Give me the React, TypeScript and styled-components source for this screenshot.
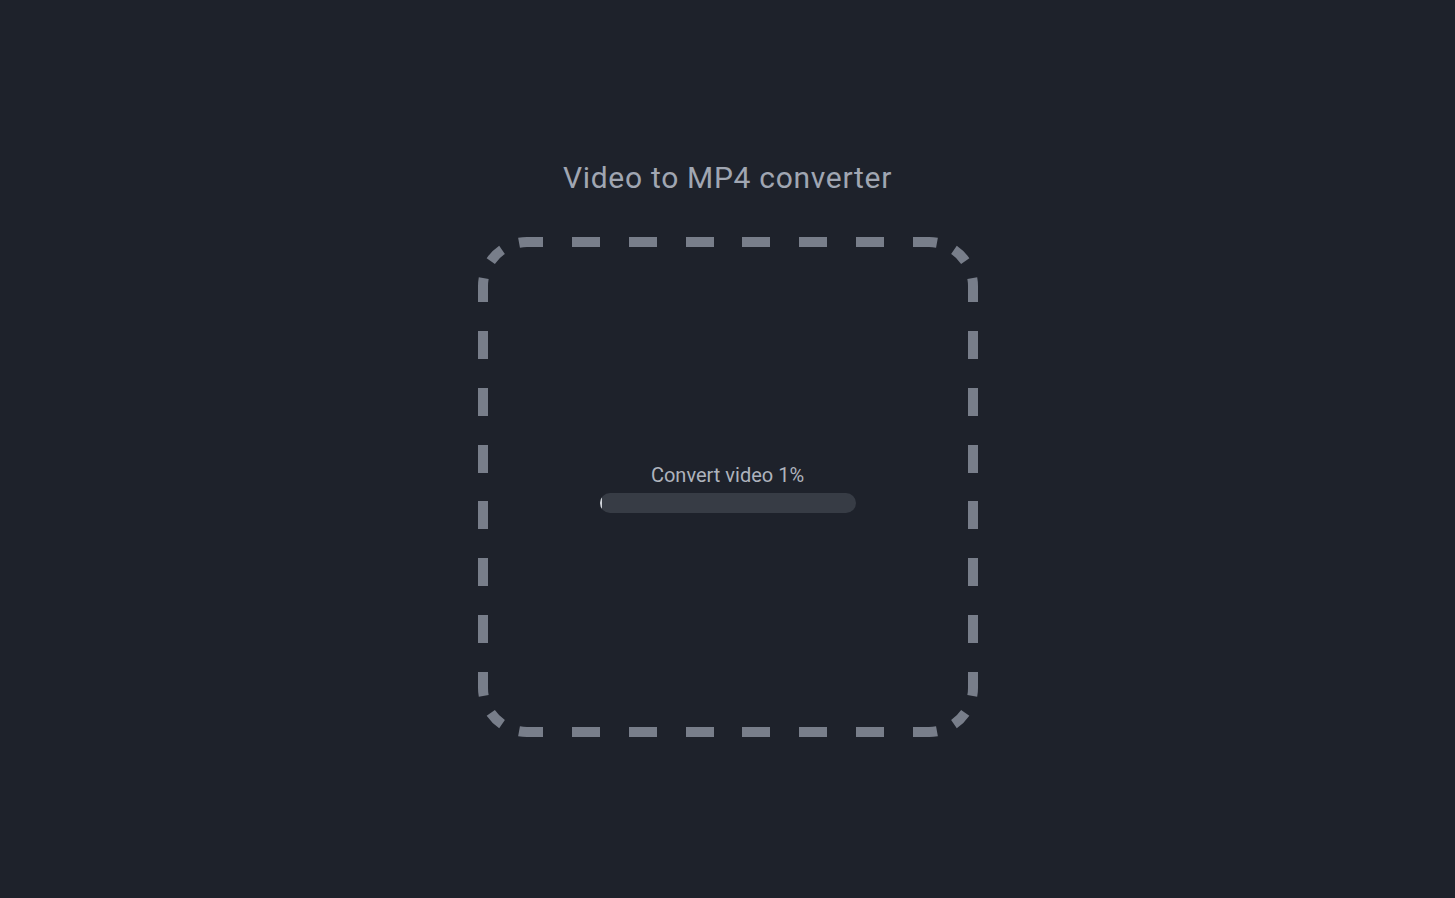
import React from 'react';
import styled, { createGlobalStyle } from 'styled-components';

const colors = {
  background: '#1e222b',
  title: '#a0a6b2',
  label: '#aeb3bd',
  border: '#787e8a',
  track: '#373c45',
  fill: '#d1d5db',
};

// dash pattern for one quarter of the outline, starting 14px right of top centre
const quarterDashes = [28, 29, 28, 29, 28, 29, 24, 18.5, 16, 18.5, 24, 29, 28, 29, 28, 29, 28, 28];
const outlinePath =
  'M250 5 H451 A44 44 0 0 1 495 49 V451 A44 44 0 0 1 451 495 H49 A44 44 0 0 1 5 451 V49 A44 44 0 0 1 49 5 Z';

const GlobalStyle = createGlobalStyle`
  html, body {
    margin: 0;
    padding: 0;
    background-color: ${colors.background};
    font-family: Roboto, "Liberation Sans", sans-serif;
  }
  #root {
    min-height: 100vh;
  }
`;

const Page = styled.main`
  min-height: 100vh;
  display: flex;
  flex-direction: column;
  align-items: center;
  padding-top: 160px;
  box-sizing: border-box;
`;

const Title = styled.h1`
  margin: 0 0 41px;
  font-size: 30px;
  line-height: 36px;
  font-weight: 400;
  letter-spacing: 0.7px;
  color: ${colors.title};
`;

const DropZone = styled.section`
  position: relative;
  width: 500px;
  height: 500px;
  display: flex;
  flex-direction: column;
  align-items: center;
  justify-content: center;
`;

const DashedOutline = styled.svg`
  position: absolute;
  inset: 0;
  width: 100%;
  height: 100%;
  pointer-events: none;
`;

const ProgressLabel = styled.div`
  font-size: 20px;
  line-height: 28px;
  color: ${colors.label};
  margin-bottom: 4px;
`;

const ProgressTrack = styled.div`
  width: 256px;
  height: 20px;
  border-radius: 10px;
  background-color: ${colors.track};
  overflow: hidden;
`;

const ProgressFill = styled.div`
  height: 100%;
  background-color: ${colors.fill};
  border-radius: 10px 0 0 10px;
`;

const App = () => {
  const progress = 1;
  return (
    <>
      <GlobalStyle />
      <Page>
        <Title>Video to MP4 converter</Title>
        <DropZone>
          <DashedOutline viewBox="0 0 500 500">
            <path
              d={outlinePath}
              fill="none"
              stroke={colors.border}
              strokeWidth={10}
              pathLength={1884}
              strokeDasharray={quarterDashes.join(' ')}
              strokeDashoffset={-14}
            />
          </DashedOutline>
          <ProgressLabel>Convert video {progress}%</ProgressLabel>
          <ProgressTrack>
            <ProgressFill style={{ width: `${progress}%` }} />
          </ProgressTrack>
        </DropZone>
      </Page>
    </>
  );
};

export default App;
